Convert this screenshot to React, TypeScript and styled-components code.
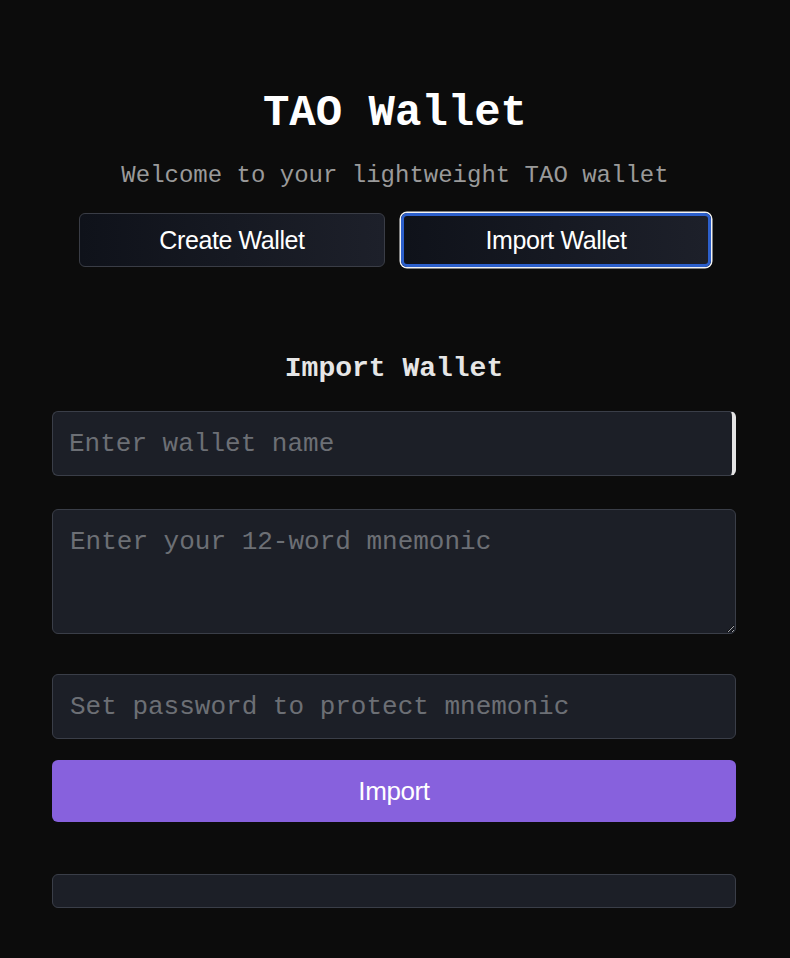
import React from 'react';
import styled, { createGlobalStyle } from 'styled-components';

const GlobalStyle = createGlobalStyle`
  html, body {
    margin: 0;
    padding: 0;
    background: #0c0c0c;
    color-scheme: dark;
  }
  * {
    box-sizing: border-box;
  }
`;

const mono = `"Liberation Mono", "Courier New", monospace`;
const sans = `"Liberation Sans", Arial, Helvetica, sans-serif`;

const Page = styled.div`
  min-height: 958px;
  background: #0c0c0c;
  padding-top: 88px;
  display: flex;
  flex-direction: column;
  align-items: center;
`;

const Title = styled.h1`
  margin: 0;
  font-family: ${mono};
  font-size: 44px;
  line-height: 50px;
  font-weight: 700;
  color: #ffffff;
`;

const Subtitle = styled.p`
  margin: 23px 0 0;
  font-family: ${mono};
  font-size: 24px;
  line-height: 30px;
  color: #9a9a9a;
`;

const Tabs = styled.div`
  margin-top: 22px;
  width: 632px;
  display: flex;
  gap: 16px;
`;

interface TabProps {
  $active?: boolean;
}

const Tab = styled.button<TabProps>`
  flex: 1;
  height: 54px;
  border-radius: 6px;
  border: ${(p) => (p.$active ? '3px solid #2c5fcb' : '1px solid #3a3d46')};
  box-shadow: ${(p) => (p.$active ? '0 0 0 1.5px #f2f2f2' : 'none')};
  background: linear-gradient(90deg, #0f121a 0%, #1d202a 100%);
  color: #ffffff;
  font-family: ${sans};
  font-size: 25px;
  letter-spacing: -0.4px;
  cursor: pointer;
`;

const Form = styled.div`
  margin-top: 85px;
  width: 684px;
  margin-left: -2px;
  display: flex;
  flex-direction: column;
`;

const FormTitle = styled.h2`
  margin: 0 0 25px;
  text-align: center;
  font-family: ${mono};
  font-size: 28px;
  line-height: 34px;
  font-weight: 700;
  color: #e6e6e6;
`;

const fieldBase = `
  width: 100%;
  background: #1c1f27;
  border: 1px solid #3a3e48;
  border-radius: 6px;
  color: #e0e0e0;
  font-family: ${mono};
  font-size: 26px;
  outline: none;
  &::placeholder {
    color: #6c6f75;
  }
`;

interface InputProps {
  $highlight?: boolean;
}

const TextInput = styled.input<InputProps>`
  ${fieldBase}
  height: 65px;
  padding: 0 16px;
  border-right: ${(p) => (p.$highlight ? '4px solid #e4e4e4' : '1px solid #3a3e48')};
`;

const MnemonicArea = styled.textarea`
  ${fieldBase}
  margin-top: 33px;
  height: 125px;
  padding: 17px 17px;
  line-height: 30px;
  resize: vertical;
`;

const PasswordInput = styled(TextInput)`
  margin-top: 40px;
  padding: 0 17px;
`;

const SubmitButton = styled.button`
  margin-top: 21px;
  height: 62px;
  border: none;
  border-radius: 6px;
  background: #8761dd;
  color: #ffffff;
  font-family: ${sans};
  font-size: 26px;
  letter-spacing: -0.4px;
  cursor: pointer;
`;

const Output = styled.div`
  margin-top: 52px;
  height: 34px;
  background: #1c1f27;
  border: 1px solid #3a3e48;
  border-radius: 6px;
`;

export default function App() {
  return (
    <>
      <GlobalStyle />
      <Page>
        <Title>TAO Wallet</Title>
        <Subtitle>Welcome to your lightweight TAO wallet</Subtitle>
        <Tabs>
          <Tab>Create Wallet</Tab>
          <Tab $active>Import Wallet</Tab>
        </Tabs>
        <Form>
          <FormTitle>Import Wallet</FormTitle>
          <TextInput $highlight placeholder="Enter wallet name" />
          <MnemonicArea placeholder="Enter your 12-word mnemonic" />
          <PasswordInput type="password" placeholder="Set password to protect mnemonic" />
          <SubmitButton>Import</SubmitButton>
          <Output />
        </Form>
      </Page>
    </>
  );
}
